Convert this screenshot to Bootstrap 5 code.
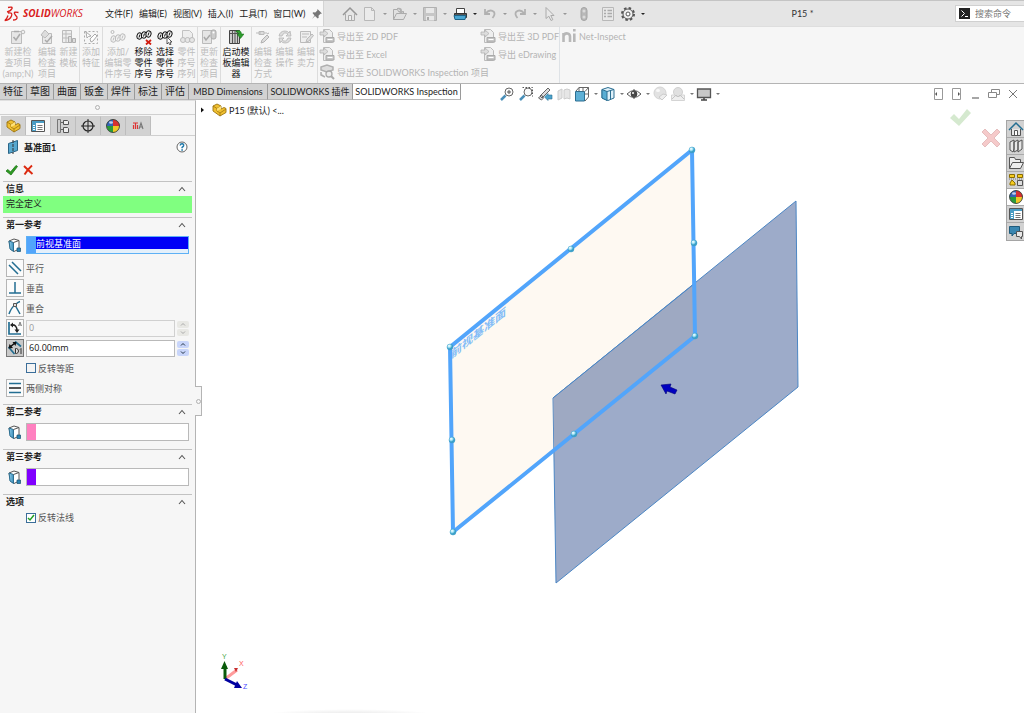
<!DOCTYPE html>
<html lang="zh-CN">
<head>
<meta charset="utf-8">
<meta name="viewport" content="width=device-width, initial-scale=1">
<title>SOLIDWORKS - P15</title>
<link href="https://cdn.jsdelivr.net/npm/bootstrap@5.3.0/dist/css/bootstrap.min.css" rel="stylesheet">
<style>
html,body{height:100%}
body{font-family:Lato,"Noto Sans CJK SC",sans-serif;font-size:9px;line-height:11px;color:#222;background:#fff;overflow:hidden}
button{border:0;background:none;padding:0;color:inherit;font:inherit}
svg{display:block;flex:none}
.ic{width:16px;height:16px}
.caret{width:14px;height:16px}
.titlebar{height:26px;background:#e5e5e5;border-top:1px solid #c4c4c4}
.brandbox{width:324px;background:#f8f8f8;border-right:1px solid #d4d4d4;padding-left:4px;flex:none}
.brand{width:101px;flex:none;gap:3px;color:#d9201c;font-family:"Open Sans",sans-serif;font-size:10px;font-style:italic;text-decoration:none}
.menus{gap:6px;flex:none}
.menus a{color:#222;text-decoration:none;white-space:nowrap}
.quick{padding-left:18px}
.faded{opacity:.4}
.doctitle{color:#333}
.searchbox{width:69px;height:17px;background:#fff;border:1px solid #d0d0d0;border-right:0;padding-left:3px;gap:5px}
.searchbox input{border:0;width:40px;padding:0;font-size:9px;background:none}
.searchbox input::placeholder{color:#777}
.ribbon{height:57px;background:#f6f6f6;border-top:1px solid #dedede}
.rgroup{border-right:1px solid #dcdcdc}
.rgroup button{width:21px;display:flex;flex-direction:column;align-items:center;gap:1px;padding-top:2px;white-space:nowrap;text-align:center;color:#111}
.rgroup button.w22{width:22px}.rgroup button.w30{width:30px}.rgroup button.w36{width:36px}
.rgroup button:disabled{color:#bdbdbd}
.rlist{padding-left:1px;width:162px}
.rlist.short{width:79px;padding-left:0}
.rlist button{height:18px;gap:2px;color:#b4b4b4;white-space:nowrap}
.strip{height:17px;border-top:1px solid #b4b4b4}
.cmdtabs{flex:none}
.cmdtabs button{height:16px;border-right:1px solid #9a9a9a;border-bottom:1px solid #b8b8b8;background:#d2d2d2;color:#222;white-space:nowrap;text-align:center;flex:none}
.cmdtabs .t27{width:27px}.cmdtabs .t78{width:79px}.cmdtabs .t85{width:85px}.cmdtabs .t108{width:108px;background:#fff}
.cmdtabs .cjk2{font-size:10px}
.views{margin-left:38px;padding-top:2px}
.views button{width:18px}.views .w19{width:19px}.views .drop{width:8px}
.wins{padding:3px 3px 0 0;gap:3px;color:#888}
.panel{width:196px;flex:none;background:#f6f6f6;border-right:1px solid #b4b4b4;border-top:1px solid #e0e0e0;position:relative}
.grip{height:14px;border-bottom:1px solid #d0d0d0}
.dot{width:5px;height:5px;border:1px solid #b0b0b0;border-radius:50%}
.ptabs{padding:1px 0 0 1px;border-bottom:1px solid #cfcfcf}
.ptabs button{width:25px;height:19px;background:#d2d2d2;border-right:1px solid #bdbdbd;border-top:1px solid #cfcfcf;display:flex;align-items:center;justify-content:center}
.ptabs button.on{background:#f6f6f6}
.ptitle{height:22px;padding:0 5px 0 6px;gap:2px}
.pok{height:23px;padding-left:4px}
.sec{margin:0 3px;border-top:1px solid #c2c2c2}
.sec.next{margin-top:6px}
.sechead{height:14px;padding:0 5px 1px 3px}
.sechead h2{font-size:9px;line-height:11px;font-weight:700;margin:0;color:#222}
.status{background:#80ff80;height:17px;padding:2px 3px;color:#222}
.prow{height:20px;padding:0 3px;gap:2px;color:#555}
.prow.sel{height:18px}
.tool{width:18px;height:18px;border:1px solid #b5b5b5;background:#fbfbfb;color:#555;display:flex;align-items:center;justify-content:center;flex:none}
.tool.down{background:#c9c9c9;border-color:#777}
.gear18{width:18px;flex:none}
.pick{height:18px;border:1px solid #b9b9b9;background:#fff}
.pick span{width:9px;flex:none}
.pick input{flex:1;min-width:0;border:0;padding:0;background:transparent;font-size:9px}
.pick.hot{border:1px solid #5eb1f5;background:#e4f0fb}
.pick.hot input{height:12px;background:#0000f6;color:#fff}
.num{flex:1;min-width:0;height:17px;border:1px solid #b9b9b9;padding:0 2px 2px;font-family:"Open Sans",sans-serif;font-size:9px;color:#111;background:#fff}
.num:disabled{color:#999;background:#f6f6f6;border-color:#d0d0d0}
.spin{width:12px;gap:1px}
.spin button{height:7px;background:#c8d5fa;border-radius:2px;display:flex;align-items:center;justify-content:center;color:#234}
.spin button:disabled{background:#e8e8e4;color:#aaa}
.tick{appearance:none;width:10px;height:10px;margin:0;border:1px solid #3b6e9a;background:#f4f4f4}
.tick:checked{background:#fff url("data:image/svg+xml,%3Csvg xmlns='http://www.w3.org/2000/svg' viewBox='0 0 8 8'%3E%3Cpath d='M1 4l2 2 4-5' fill='none' stroke='%2322a022' stroke-width='1.5'/%3E%3C/svg%3E")}
.tickrow{padding-left:23px}
.tickrow.low{height:17px}
.pull{position:absolute;right:-7px;top:285px;width:7px;height:30px;background:#f6f6f6;border:1px solid #b4b4b4;border-left:0;display:flex;align-items:center;justify-content:center}
.scene{position:absolute;inset:0;width:100%;height:100%}
.tree{position:absolute;left:3px;top:2px;gap:2px}
.confirm{position:absolute;right:23px;top:8px;width:52px;height:42px}
.taskpane{position:absolute;right:0;top:20px;width:18px;border:1px solid #a5a5a5;border-right:0}
.taskpane button{height:17px;background:#d2d2d2;border-bottom:1px solid #aaa;display:flex;align-items:center;justify-content:center}
.taskpane button.on{background:#fff}
.taskpane button:last-child{border-bottom:0}
</style>
</head>
<body class="d-flex flex-column">
<svg width="0" height="0" class="position-absolute" aria-hidden="true">
<defs>
<linearGradient id="gb" x1="0" x2="1"><stop offset="0" stop-color="#8fd0ee"/><stop offset="1" stop-color="#3c8cb8"/></linearGradient>
<radialGradient id="ball" cx=".35" cy=".3"><stop offset="0" stop-color="#fff"/><stop offset=".5" stop-color="#a8e6f8"/><stop offset="1" stop-color="#3aa0c8"/></radialGradient>
<radialGradient id="shade"><stop offset="0" stop-color="#000" stop-opacity=".12"/><stop offset="1" stop-color="#000" stop-opacity="0"/></radialGradient>
<symbol id="dn" viewBox="0 0 14 16"><path d="M5 7h4l-2 2z" fill="#222"/></symbol>
<symbol id="dng" viewBox="0 0 8 16"><path d="M2 7h4l-2 2z" fill="#777"/></symbol>
<symbol id="up" viewBox="0 0 10 8"><path d="M2 6l3-3.500 3 3.500" fill="none" stroke="#555" stroke-width="1.100"/></symbol>
<symbol id="newchk" viewBox="0 0 16 16"><path d="M1.500 2.500h10v12h-10z" fill="#e6e6e6" stroke="#bbb"/><path d="M4 2.500h5M3.500 8l2.500 3 4-6" fill="none" stroke="#aaa" stroke-width="1.600"/><circle cx="13" cy="3" r="1.800" fill="#eee" stroke="#bbb"/></symbol>
<symbol id="edchk" viewBox="0 0 16 16"><path d="M3.500 4.500h9v10h-9z" fill="#e9e9e9" stroke="#bbb"/><path d="M2 6l4-5 4 4-4 4z" fill="#ddd" stroke="#bbb"/><path d="M6 11l2 2 5-6" fill="none" stroke="#aaa" stroke-width="1.500"/></symbol>
<symbol id="tmpl" viewBox="0 0 16 16"><path d="M1.500 1.500h9v12h-9z" fill="#eee" stroke="#bbb"/><path d="M2 5h8M2 9h6M5 2v11" stroke="#bbb"/><path d="M7.500 7.500h3v6h-3zM11.500 9.500h3v4h-3z" fill="#ddd" stroke="#b0b0b0"/></symbol>
<symbol id="feat" viewBox="0 0 16 16"><path d="M1.500 2.500h13v12h-13z" fill="none" stroke="#aaa" stroke-dasharray="2 2"/><path d="M3 3l1 6 1.500-1.500L8 7zM8 13l-1-3 5-5 2 2-4 5z" fill="#fff" stroke="#aaa"/></symbol>
<symbol id="ball3" viewBox="0 0 16 16"><g fill="#f4f4f4" stroke="currentColor"><ellipse cx="3.500" cy="9" rx="2.500" ry="3.200" transform="rotate(15 3.500 9)"/><ellipse cx="8" cy="8" rx="2.500" ry="3.200" transform="rotate(15 8 8)"/><ellipse cx="12.500" cy="7" rx="2.500" ry="3.200" transform="rotate(15 12.500 7)"/><path d="M3 10.500l1-3M7.500 9.500l1-3M12 8.500l1-3"/></g></symbol>
<symbol id="addb" viewBox="0 0 16 16"><circle cx="2.500" cy="3" r="1.500" fill="none" stroke="#bbb"/><use href="#ball3" y="1" width="16" height="16"/></symbol>
<symbol id="rmb" viewBox="0 0 16 16"><use href="#ball3" y="-2" width="16" height="16"/><path d="M10 11l5 4.500M15 11l-5 4.500" stroke="#d01c10" stroke-width="1.800"/></symbol>
<symbol id="selb" viewBox="0 0 16 16"><use href="#ball3" y="-2" width="16" height="16"/><path d="M10 8v7l1.500-1.500L13 16l1-.5-1-2.500h2z" fill="#fff" stroke="#333" stroke-width=".8"/></symbol>
<symbol id="seq" viewBox="0 0 16 16"><path d="M3.500 1.500h7l3 3v7h-10z" fill="#eee" stroke="#c2c2c2"/><g fill="#e6e6e6" stroke="#bbb"><circle cx="4" cy="11" r="2.500"/><circle cx="8.500" cy="11" r="2.500"/><circle cx="13" cy="11" r="2.500"/></g></symbol>
<symbol id="upd" viewBox="0 0 16 16"><path d="M1.500 1.500h9v13h-9z" fill="#e6e6e6" stroke="#bbb"/><path d="M3 8l2 3 4-5" fill="none" stroke="#aaa" stroke-width="1.500"/><rect x="10" y="1" width="5" height="9" rx="2" fill="#ccc" stroke="#aaa"/><circle cx="12.500" cy="3.500" r="1" fill="#fff"/></symbol>
<symbol id="launch" viewBox="0 0 16 16"><path d="M1.500 1.500h10v13h-10z" fill="#ccc" stroke="#444"/><path d="M2 4.500h9M4.500 2v12M7 2v12M9.500 2v12" stroke="#555"/><path d="M8 2q5-2 5.500 3H16l-3.500 4.500L9 5h2q0-2-3-2z" fill="#2d9c2d" stroke="#176b17" stroke-width=".5"/></symbol>
<symbol id="meth" viewBox="0 0 16 16"><path d="M1 4h5M4 2.500h5v3H4zM9 4h3" fill="#ddd" stroke="#bbb"/><path d="M6 14l1-3 5-5 2 2-5 5zM12 5l2-1" fill="#ddd" stroke="#b2b2b2"/></symbol>
<symbol id="cyc" viewBox="0 0 16 16"><path d="M2 7q1-5 6-5 3 0 4 2l1-2 1 5H9l2-2q-4-3-6 2zM14 9q-1 5-6 5-3 0-4-2l-1 2-1-5h5l-2 2q4 3 6-2z" fill="#ddd" stroke="#b5b5b5" stroke-width=".8"/></symbol>
<symbol id="vend" viewBox="0 0 16 16"><path d="M2.500 2.500h10v11h-10z" fill="#eee" stroke="#bbb"/><path d="M4 5h7M4 8h5M8 13l1-3 5-5 1.500 1.500L11 12z" fill="#ddd" stroke="#bbb"/></symbol>
<symbol id="exp" viewBox="0 0 16 16"><path d="M4.500 1.500h6l3 3v10h-9z" fill="#eee" stroke="#bbb"/><path d="M1 4h4V2l4 3.500L5 9V7H1z" fill="#ddd" stroke="#b5b5b5" stroke-width=".8"/><path d="M7 9.500h8v4.500H7z" fill="#c6c6c6" stroke="#aaa"/><path d="M8.500 11.500h5" stroke="#fff"/></symbol>
<symbol id="expi" viewBox="0 0 16 16"><path d="M2 3l6-2 6 2v3l-6 2-6-2zM2 8v3l4 2" fill="#ddd" stroke="#b0b0b0" stroke-width="1.500"/><circle cx="10" cy="10" r="3" fill="#eee" stroke="#aaa" stroke-width="1.300"/><path d="M12 12l3 3" stroke="#aaa" stroke-width="2"/></symbol>
<symbol id="part" viewBox="0 0 16 16"><path d="M2 4l4-2 4 2v3l3-1.500 2 1v4L9 14l-7-5z" fill="#f0c030" stroke="#9c7410" stroke-width=".9"/><path d="M2 4l4 2.500 4-2.500M6 6.500V9l3 2 6-4M9 11v3" fill="none" stroke="#9c7410" stroke-width=".8"/><path d="M6 6.500L10 4v3L6 9z" fill="#ffe27a"/></symbol>
<symbol id="plist" viewBox="0 0 16 16"><path d="M1.500 2.500h13v11h-13z" fill="#fff" stroke="#555"/><path d="M2 3h12v2H2zM2 5h4v8H2z" fill="#4a9cc4"/><path d="M3 7.500h2M3 9.500h2M3 11.500h2" stroke="#fff"/><path d="M7.500 7.500h5M7.500 9.500h5M7.500 11.500h5" stroke="#777"/></symbol>
<symbol id="conf" viewBox="0 0 16 16"><path d="M2.500 1.500h3v13h-3z" fill="#ccc" stroke="#777"/><path d="M6 4.500h2M6 11.500h2" stroke="#666"/><path d="M8.500 2.500h4l1 1v3h-5zM8.500 9.500h4l1 1v4h-5z" fill="#eee" stroke="#555"/></symbol>
<symbol id="cross" viewBox="0 0 16 16"><circle cx="8" cy="8" r="5" fill="none" stroke="#222" stroke-width="1.200"/><path d="M8 1v14M1 8h14" stroke="#222"/></symbol>
<symbol id="wheel" viewBox="0 0 16 16"><circle cx="8" cy="8" r="6.500" fill="#2a9b3a"/><path d="M8 8V1.500A6.500 6.500 0 0 0 1.500 8z" fill="#3264b8"/><path d="M8 8V1.500A6.500 6.500 0 0 1 14.500 8z" fill="#d83030"/><path d="M8 8h6.500A6.500 6.500 0 0 1 8 14.500z" fill="#f0c828"/><circle cx="8" cy="8" r="6.500" fill="none" stroke="#333" stroke-width=".8"/><ellipse cx="6" cy="4.500" rx="2" ry="1.300" fill="#fff" opacity=".7"/></symbol>
<symbol id="tan" viewBox="0 0 16 16"><path d="M3 5h5M5.500 5v6M3.500 7v4M7.500 7v4" stroke="#d33" stroke-width="1.200"/><path d="M9 11l2-6 2 6M10 9h3" fill="none" stroke="#777" stroke-width="1.100"/></symbol>
<symbol id="plane" viewBox="0 0 16 16"><path d="M2.500 4.500l9-3v10l-9 3z" fill="#58a8cf" stroke="#2a6587"/><path d="M7 1v14" stroke="#333" stroke-dasharray="3 1"/></symbol>
<symbol id="okay" viewBox="0 0 16 16"><path d="M2 9l2-1.500L6.500 10 12 3.500l1.500 1L7 13z" fill="#2d9a22" stroke="#1d7717" stroke-width=".8"/></symbol>
<symbol id="no" viewBox="0 0 16 16"><path d="M4 4q3 3 8.500 8M12 3.500Q8 7 4.500 12.500" fill="none" stroke="#dc2a10" stroke-width="1.900"/></symbol>
<symbol id="help" viewBox="0 0 16 16"><circle cx="8" cy="8" r="5" fill="#fff" stroke="#666"/><path d="M6.200 6.500q.2-1.800 2-1.700 1.700.3 1.400 1.900-.2.800-1.500 1.600v1" fill="none" stroke="#1e78aa" stroke-width="1.500"/><path d="M7.300 10.300h1.600v1.400H7.300z" fill="#1e78aa"/></symbol>
<symbol id="cube" viewBox="0 0 16 16"><path d="M3 4l5-2 5 1.500V12l-5 2.500L4.500 12z" fill="#fff" stroke="#555"/><path d="M3 4l4.500 1.500v9L4 12z" fill="url(#gb)" stroke="#2c6f92"/><path d="M7.500 5.500L13 3.500" stroke="#555"/><path d="M11 11h3.500v3.500H11z" fill="#2b86b5" stroke="#174f6f" stroke-width=".7"/></symbol>
<symbol id="house" viewBox="0 0 16 16"><path d="M3.500 8v6.500h9V8" fill="#e8e8e8" stroke="#555"/><path d="M1 9l7-7 7 7" fill="none" stroke="currentColor" stroke-width="1.500"/><path d="M6.500 14V9.500h3V14" fill="#fff" stroke="#555"/></symbol>
<symbol id="mag" viewBox="0 0 16 16"><path d="M2 14l4.500-4.500" stroke="#4a8fb8" stroke-width="2.500"/><circle cx="10" cy="6" r="4" fill="#fafafa" stroke="#666"/></symbol>
<symbol id="bino" viewBox="0 0 16 16"><path d="M3 10l8-8 2 2-8 8zM1.500 12l3-3 2 3-2 2z" fill="#ddd" stroke="#666"/><path d="M15 9h-4V7.500L7.500 11l3.500 3.500V13h4z" fill="#4ba3cc" stroke="#2c6f92" stroke-width=".6"/></symbol>
<symbol id="sect" viewBox="0 0 16 16"><path d="M2 5l4-2v9l-4 2zM8 4l3-1 3 1v9l-3-1-3 1z" fill="#e6e6e6" stroke="#ccc"/></symbol>
<symbol id="orient" viewBox="0 0 16 16"><path d="M1.500 5.500h9V15h-9z" fill="#5eb0d6" stroke="#2c6f92"/><path d="M2 5l3-3.500h9.500V11L11 15M11 5.500l3.500-4M5 1.500v4M9 1.500v4M11 8h3" fill="none" stroke="#666"/></symbol>
<symbol id="disp" viewBox="0 0 16 16"><path d="M2 3.500L8 1.500l6 2v8.500l-6 2.500L2 12z" fill="#dff1fa" stroke="#2c6f92"/><path d="M2 3.500l5 2v9L2 12z" fill="#5aaed4" stroke="#2c6f92"/><path d="M7 5.500l7-2M10.500 4.500v9" stroke="#2c6f92"/></symbol>
<symbol id="eye" viewBox="0 0 16 16"><path d="M1 8Q8 1 15 8 8 15 1 8z" fill="#fff" stroke="#555"/><circle cx="8" cy="8" r="3.300" fill="#444"/><path d="M8 3v10" stroke="#555"/><circle cx="7" cy="7" r="1" fill="#fff"/></symbol>
<symbol id="sphere" viewBox="0 0 16 16"><circle cx="8" cy="7" r="6" fill="#e2e2e2" stroke="#d4d4d4"/><ellipse cx="6" cy="4.500" rx="2" ry="1.500" fill="#f8f8f8"/><path d="M7 11l4-3 4 1-5 5z" fill="#eee" stroke="#ccc"/></symbol>
<symbol id="spherebg" viewBox="0 0 16 16"><path d="M1.500 9h13v5.500h-13z" fill="#eee" stroke="#d4d4d4"/><circle cx="8" cy="6" r="4.500" fill="#e0e0e0" stroke="#d0d0d0"/><path d="M2 13l4-4 2 2 2-2 4 4" fill="none" stroke="#c4c4c4"/></symbol>
<symbol id="mon" viewBox="0 0 16 16"><path d="M1.500 3h13v8.500h-13z" fill="#c8c8c8" stroke="#555" stroke-width="1.300"/><path d="M8 12v2M5 14h6" stroke="#444" stroke-width="1.500"/></symbol>
</defs>
</svg>

<header class="titlebar d-flex">
  <div class="brandbox d-flex align-items-center">
    <a href="#" class="brand d-flex align-items-center">
      <svg width="16" height="16" viewBox="0 0 16 16" fill="none" stroke="#d9201c" stroke-width="1.300"><path d="M4 1.500q5-1 4 1Q7 5 3 6M4 7q5-1 3.500 3Q6 14 .8 14.500 3 13 4 9.500M14.500 6.500q-5-1-4 1 .5 1.500 2.500 3.500.5 3-4 3"/></svg>
      <span><b>SOLID</b>WORKS</span></a>
    <nav class="menus d-flex align-items-center">
      <a href="#">文件(F)</a><a href="#">编辑(E)</a><a href="#">视图(V)</a><a href="#">插入(I)</a><a href="#">工具(T)</a><a href="#">窗口(W)</a>
      <button aria-label="固定"><svg width="12" height="12" viewBox="0 0 12 12"><path d="M6.500 1L11 5.500l-1.500.3-2 2 .2 2-1 .7L4 8l-3 3 2.500-3.500L1.500 5l.8-.8 2 .2 2-2z" fill="#777"/></svg></button>
    </nav>
  </div>
  <div class="quick d-flex align-items-center">
    <button aria-label="主页" class="faded"><svg class="ic"><use href="#house"/></svg></button>
    <button aria-label="新建" class="d-flex faded ms-1"><svg class="ic" viewBox="0 0 16 16"><path d="M2.500 1.500h7l3 3v10h-10zM9.500 1.500v3h3" fill="#f4f4f4" stroke="#777"/></svg><svg class="caret"><use href="#dn"/></svg></button>
    <button aria-label="打开" class="d-flex faded"><svg class="ic" viewBox="0 0 16 16"><path d="M1.500 13.500v-10h4l1 2h5v2M1.500 13.500l3-6h10l-3 6z" fill="#ddd" stroke="#555"/><path d="M5 2q5-1 5 3h2L9 8 6 5h2q0-2-3-2z" fill="#666"/></svg><svg class="caret"><use href="#dn"/></svg></button>
    <button aria-label="保存" class="d-flex faded"><svg class="ic" viewBox="0 0 16 16"><path d="M1.500 1.500h13v13h-13z" fill="#999" stroke="#666"/><path d="M4 2h8v5H4zM4 10h8v4.500H4z" fill="#eee"/><path d="M6 11v3" stroke="#555" stroke-width="2"/></svg><svg class="caret"><use href="#dn"/></svg></button>
    <button aria-label="打印" class="d-flex"><svg class="ic" viewBox="0 0 16 16"><path d="M4.500 2.500h8V8h-8z" fill="#fff" stroke="#444"/><path d="M2.500 7.500h12v4h-12z" fill="#555" stroke="#333"/><path d="M2 9.500h12l-1 4H3z" fill="#49a6d2" stroke="#1e6488"/></svg><svg class="caret"><use href="#dn"/></svg></button>
    <button aria-label="撤销" class="d-flex faded"><svg class="ic" viewBox="0 0 16 16"><path d="M3 3v5h5M3.500 7.500Q8 2.500 12 6q1.500 2.500-1.500 6" fill="none" stroke="#666" stroke-width="1.800"/></svg><svg class="caret"><use href="#dn"/></svg></button>
    <button aria-label="重做" class="d-flex faded"><svg class="ic" viewBox="0 0 16 16"><path d="M13 3v5H8M12.500 7.500Q8 2.500 4 6q-1.500 2.500 1.500 6" fill="none" stroke="#666" stroke-width="1.800"/></svg><svg class="caret"><use href="#dn"/></svg></button>
    <button aria-label="选择" class="d-flex faded"><svg class="ic" viewBox="0 0 16 16"><path d="M4 1.500v11l2.800-2.300 2.200 4.300 1.800-.8-2-4.200H12z" fill="#eee" stroke="#555"/></svg><svg class="caret"><use href="#dn"/></svg></button>
    <button aria-label="重建" class="faded ms-1"><svg class="ic" viewBox="0 0 16 16"><rect x="5" y="1.500" width="6" height="13" rx="3" fill="#777" stroke="#444"/><circle cx="8" cy="5" r="1.500" fill="#ccc"/><circle cx="8" cy="11" r="1.500" fill="#ccc"/></svg></button>
    <button aria-label="文件属性" class="faded ms-2"><svg class="ic" viewBox="0 0 16 16"><path d="M2.500 1.500h11v13h-11z" fill="#eee" stroke="#777"/><path d="M4 4.500h2M4 7.500h2M4 10.500h2M7.500 4.500H12M7.500 7.500H12M7.500 10.500H12" stroke="#555" stroke-width="1.300"/></svg></button>
    <button aria-label="选项" class="d-flex ms-1"><svg class="ic" viewBox="0 0 16 16"><circle cx="8" cy="8" r="6" fill="none" stroke="#555" stroke-width="2" stroke-dasharray="2.500 2.200"/><circle cx="8" cy="8" r="5" fill="#f0f0f0" stroke="#555"/><circle cx="8" cy="8" r="2" fill="#fff" stroke="#555"/></svg><svg class="caret"><use href="#dn"/></svg></button>
  </div>
  <div class="doctitle flex-grow-1 d-flex align-items-center justify-content-center">P15 *</div>
  <div class="d-flex align-items-center"><label class="searchbox d-flex align-items-center"><svg width="11" height="11" viewBox="0 0 11 11"><path d="M0 0h11v11H0z" fill="#222"/><path d="M2.500 2.500l3 3-3 3M6 8.500h3" fill="none" stroke="#fff"/></svg><input type="text" placeholder="搜索命令" aria-label="搜索命令"></label></div>
</header>

<section class="ribbon d-flex">
  <div class="rgroup d-flex"><button class="w36" disabled><svg class="ic"><use href="#newchk"/></svg><span>新建检<br>查项目<br>(amp;N)</span></button><button class="w22" disabled><svg class="ic"><use href="#edchk"/></svg><span>编辑<br>检查<br>项目</span></button><button disabled><svg class="ic"><use href="#tmpl"/></svg><span>新建<br>模板</span></button></div>
  <div class="rgroup d-flex"><button class="w22" disabled><svg class="ic"><use href="#feat"/></svg><span>添加<br>特征</span></button></div>
  <div class="rgroup d-flex"><button class="w30" disabled><svg class="ic"><use href="#addb"/></svg><span>添加/<br>编辑零<br>件序号</span></button><button><svg class="ic"><use href="#rmb"/></svg><span>移除<br>零件<br>序号</span></button><button class="w22"><svg class="ic"><use href="#selb"/></svg><span>选择<br>零件<br>序号</span></button><button disabled><svg class="ic"><use href="#seq"/></svg><span>零件<br>序号<br>序列</span></button></div>
  <div class="rgroup d-flex"><button class="w22" disabled><svg class="ic"><use href="#upd"/></svg><span>更新<br>检查<br>项目</span></button></div>
  <div class="rgroup d-flex"><button class="w30"><svg class="ic"><use href="#launch"/></svg><span>启动模<br>板编辑<br>器</span></button></div>
  <div class="rgroup d-flex"><button class="w22" disabled><svg class="ic"><use href="#meth"/></svg><span>编辑<br>检查<br>方式</span></button><button disabled><svg class="ic"><use href="#cyc"/></svg><span>编辑<br>操作</span></button><button class="w22" disabled><svg class="ic"><use href="#vend"/></svg><span>编辑<br>卖方</span></button></div>
  <div class="d-flex border-end">
    <div class="rlist d-flex flex-column align-items-start"><button class="d-flex align-items-center" disabled><svg class="ic"><use href="#exp"/></svg>导出至 2D PDF</button><button class="d-flex align-items-center" disabled><svg class="ic"><use href="#exp"/></svg>导出至 Excel</button><button class="d-flex align-items-center" disabled><svg class="ic"><use href="#expi"/></svg>导出至 SOLIDWORKS Inspection 项目</button></div>
    <div class="rlist short d-flex flex-column align-items-start"><button class="d-flex align-items-center" disabled><svg class="ic"><use href="#exp"/></svg>导出至 3D PDF</button><button class="d-flex align-items-center" disabled><svg class="ic"><use href="#exp"/></svg>导出 eDrawing</button></div>
  </div>
  <div class="rlist"><button class="d-flex align-items-center" disabled><svg width="16" height="16" viewBox="0 0 16 16" fill="none" stroke="#b8b8b8" stroke-width="2.600"><path d="M2.500 14V5M2.500 8q1-3 4-2.500 2.500.5 2.500 3V14M13.300 5.500V14M13.300 1v2.500"/></svg>Net-Inspect</button></div>
</section>

<div class="strip d-flex align-items-start">
  <div class="cmdtabs d-flex" role="tablist"><button class="t27 cjk2">特征</button><button class="t27 cjk2">草图</button><button class="t27 cjk2">曲面</button><button class="t27 cjk2">钣金</button><button class="t27 cjk2">焊件</button><button class="t27 cjk2">标注</button><button class="t27 cjk2">评估</button><button class="t78">MBD Dimensions</button><button class="t85">SOLIDWORKS 插件</button><button class="t108">SOLIDWORKS Inspection</button></div>
  <div class="views d-flex">
    <button class="w19" aria-label="整屏显示"><svg class="ic" viewBox="0 0 16 16"><use href="#mag"/><path d="M8 6h4M10 4v4" stroke="#555"/></svg></button>
    <button class="w19" aria-label="局部放大"><svg class="ic" viewBox="0 0 16 16"><use href="#mag"/><path d="M4.500 1.500h10v9" fill="none" stroke="#555" stroke-dasharray="1.500 1.500"/></svg></button>
    <button class="w19" aria-label="上一视图"><svg class="ic"><use href="#bino"/></svg></button>
    <button aria-label="剖面视图"><svg class="ic"><use href="#sect"/></svg></button>
    <button aria-label="视图定向"><svg class="ic"><use href="#orient"/></svg></button><button class="drop" aria-label="展开"><svg width="8" height="16"><use href="#dng"/></svg></button>
    <button aria-label="显示样式"><svg class="ic"><use href="#disp"/></svg></button><button class="drop" aria-label="展开"><svg width="8" height="16"><use href="#dng"/></svg></button>
    <button aria-label="隐藏显示"><svg class="ic"><use href="#eye"/></svg></button><button class="drop" aria-label="展开"><svg width="8" height="16"><use href="#dng"/></svg></button>
    <button aria-label="编辑外观"><svg class="ic"><use href="#sphere"/></svg></button>
    <button aria-label="应用布景"><svg class="ic"><use href="#spherebg"/></svg></button><button class="drop" aria-label="展开"><svg width="8" height="16"><use href="#dng"/></svg></button>
    <button aria-label="视图设置"><svg class="ic"><use href="#mon"/></svg></button><button class="drop" aria-label="展开"><svg width="8" height="16"><use href="#dng"/></svg></button>
  </div>
  <div class="wins d-flex ms-auto">
    <button aria-label="左侧"><svg width="16" height="14" viewBox="0 0 16 14"><path d="M4.500 1.500h8v11h-8z" fill="#fff" stroke="#999"/><path d="M7 5v4L5 7z" fill="#555"/></svg></button>
    <button aria-label="右侧"><svg width="16" height="14" viewBox="0 0 16 14"><path d="M3.500 1.500h8v11h-8z" fill="#fff" stroke="#999"/><path d="M9 5v4l2-2z" fill="#555"/></svg></button>
    <button aria-label="最小化"><svg width="15" height="14" viewBox="0 0 15 14"><path d="M4 11h7" stroke="#888" stroke-width="1.500"/></svg></button>
    <button aria-label="还原"><svg width="16" height="14" viewBox="0 0 16 14"><path d="M5.500 5V2.500h8v5H11M2.500 5.500h8v5h-8z" fill="none" stroke="#888"/></svg></button>
    <button aria-label="关闭"><svg width="16" height="14" viewBox="0 0 16 14"><path d="M4 3l8 8M12 3l-8 8" stroke="#777"/></svg></button>
  </div>
</div>

<main class="d-flex flex-grow-1">
  <aside class="panel">
    <div class="grip d-flex justify-content-center align-items-center"><span class="dot"></span></div>
    <div class="ptabs d-flex"><button aria-label="设计树"><svg class="ic"><use href="#part"/></svg></button><button class="on" aria-label="属性"><svg class="ic"><use href="#plist"/></svg></button><button aria-label="配置"><svg class="ic"><use href="#conf"/></svg></button><button aria-label="尺寸"><svg class="ic"><use href="#cross"/></svg></button><button aria-label="外观"><svg class="ic"><use href="#wheel"/></svg></button><button aria-label="检查"><svg class="ic"><use href="#tan"/></svg></button></div>
    <div class="ptitle d-flex align-items-center"><svg class="ic"><use href="#plane"/></svg><b class="flex-grow-1">基准面1</b><button aria-label="帮助"><svg class="ic"><use href="#help"/></svg></button></div>
    <div class="pok d-flex align-items-center"><button aria-label="确定"><svg class="ic"><use href="#okay"/></svg></button><button aria-label="取消"><svg class="ic"><use href="#no"/></svg></button></div>
    <section class="sec mb-1"><div class="sechead d-flex align-items-center justify-content-between"><h2>信息</h2><button aria-label="折叠"><svg width="10" height="8"><use href="#up"/></svg></button></div><div class="status">完全定义</div></section>
    <section class="sec"><div class="sechead d-flex align-items-center justify-content-between"><h2>第一参考</h2><button aria-label="折叠"><svg width="10" height="8"><use href="#up"/></svg></button></div>
      <div class="prow sel d-flex align-items-center mt-1 mb-1"><span class="gear18"><svg class="ic"><use href="#cube"/></svg></span><div class="pick hot d-flex flex-grow-1"><span style="background:#52a5fb"></span><input value="前视基准面" aria-label="第一参考"></div></div>
      <div class="prow d-flex align-items-center"><button class="tool" aria-label="平行"><svg class="ic" viewBox="0 0 16 16"><path d="M2 5l9 9M5 2l9 9" stroke="#236e92" stroke-width="1.500"/></svg></button>平行</div>
      <div class="prow d-flex align-items-center"><button class="tool" aria-label="垂直"><svg class="ic" viewBox="0 0 16 16"><path d="M8 2v11M2 13h12" stroke="#236e92" stroke-width="1.500"/></svg></button>垂直</div>
      <div class="prow d-flex align-items-center"><button class="tool" aria-label="重合"><svg class="ic" viewBox="0 0 16 16"><path d="M2 14q2-6 6-9 3-3 5-3.500M8 5l5 9" fill="none" stroke="#236e92" stroke-width="1.500"/><path d="M6.500 3.500h3v3h-3z" fill="#ddd" stroke="#555"/></svg></button>重合</div>
      <div class="prow d-flex align-items-center"><button class="tool" aria-label="角度"><svg class="ic" viewBox="0 0 16 16"><path d="M2 2v12h12" fill="none" stroke="#236e92" stroke-width="1.700"/><path d="M4 5q6-1 6 6" fill="none" stroke="#222" stroke-width="1.500"/><path d="M3 5l3-2.500v5zM10 13l-2.500-3.500h5z" fill="#222"/><path d="M11.500 6L13 2l1.500 4M12 5h2" fill="none" stroke="#666" stroke-width=".8"/></svg></button><input class="num" value="0" disabled aria-label="角度"><div class="spin d-flex flex-column"><button disabled aria-label="增加"><svg width="8" height="5" viewBox="0 0 8 5"><path d="M2 3.500l2-2 2 2" fill="none" stroke="currentColor"/></svg></button><button disabled aria-label="减少"><svg width="8" height="5" viewBox="0 0 8 5"><path d="M2 1.500l2 2 2-2" fill="none" stroke="currentColor"/></svg></button></div></div>
      <div class="prow d-flex align-items-center"><button class="tool down" aria-label="距离"><svg class="ic" viewBox="0 0 16 16"><path d="M1.500 7l6 7M8 1.500l6 5" stroke="#236e92" stroke-width="1.700"/><path d="M3 7l5-4" stroke="#111" stroke-width="1.600"/><path d="M1.500 8.500l1-4.500 3.500 4zM9.500 2L8.500 6 5.500 2z" fill="#111"/><path d="M8.500 8.500v5h1q2-.5 2-2.500t-2-2.500zM13 9.500l1-1v5.500" fill="#ddd" stroke="#333"/></svg></button><input class="num" value="60.00mm" aria-label="偏移距离"><div class="spin d-flex flex-column"><button aria-label="增加"><svg width="8" height="5" viewBox="0 0 8 5"><path d="M2 3.500l2-2 2 2" fill="none" stroke="currentColor"/></svg></button><button aria-label="减少"><svg width="8" height="5" viewBox="0 0 8 5"><path d="M2 1.500l2 2 2-2" fill="none" stroke="currentColor"/></svg></button></div></div>
      <label class="prow tickrow d-flex align-items-center"><input type="checkbox" class="tick">反转等距</label>
      <div class="prow d-flex align-items-center"><button class="tool" aria-label="两侧对称"><svg class="ic" viewBox="0 0 16 16"><path d="M2 3.500h12M2 12.500h12" stroke="#236e92" stroke-width="1.500"/><path d="M2 8h12" stroke="#555" stroke-width="2"/></svg></button>两侧对称</div>
    </section>
    <section class="sec next pb-2"><div class="sechead d-flex align-items-center justify-content-between"><h2>第二参考</h2><button aria-label="折叠"><svg width="10" height="8"><use href="#up"/></svg></button></div>
      <div class="prow sel d-flex align-items-center mt-1"><span class="gear18"><svg class="ic"><use href="#cube"/></svg></span><div class="pick d-flex flex-grow-1"><span style="background:#ff80c0"></span><input aria-label="第二参考"></div></div></section>
    <section class="sec pb-2"><div class="sechead d-flex align-items-center justify-content-between"><h2>第三参考</h2><button aria-label="折叠"><svg width="10" height="8"><use href="#up"/></svg></button></div>
      <div class="prow sel d-flex align-items-center mt-1"><span class="gear18"><svg class="ic"><use href="#cube"/></svg></span><div class="pick d-flex flex-grow-1"><span style="background:#8000ff"></span><input aria-label="第三参考"></div></div></section>
    <section class="sec"><div class="sechead d-flex align-items-center justify-content-between"><h2>选项</h2><button aria-label="折叠"><svg width="10" height="8"><use href="#up"/></svg></button></div>
      <label class="prow tickrow low d-flex align-items-center"><input type="checkbox" class="tick" checked>反转法线</label></section>
    <div class="pull"><span class="dot"></span></div>
  </aside>

  <section class="position-relative flex-grow-1">
    <svg class="scene" viewBox="196 100 828 613" preserveAspectRatio="xMidYMid meet">
      <path d="M450 347L692 150l3 186-242 196z" fill="#fef9f2"/>
      <path d="M553 398L796 201l2 186-242 196z" fill="#9dabc9" stroke="#4b86c4"/>
      <path d="M553.500 398L694 284l1 52-141 114z" fill="#9ea9c2"/>
      <path d="M553 398L694 284" stroke="#4b86c4"/>
      <text transform="translate(451 359) skewY(-39)" font-size="11" font-weight="700" fill="#84bdf7" font-family="Noto Sans CJK SC">前视基准面</text>
      <path d="M450 347L692 150l3 186-242 196z" fill="none" stroke="#52a5fb" stroke-width="4" stroke-linejoin="round"/>
      <g fill="url(#ball)" stroke="#3b9cc8" stroke-width=".5"><circle cx="450" cy="347" r="3"/><circle cx="571" cy="249" r="3"/><circle cx="692" cy="150" r="3"/><circle cx="694" cy="243" r="3"/><circle cx="695" cy="336" r="3"/><circle cx="574" cy="434" r="3"/><circle cx="453" cy="532" r="3"/><circle cx="452" cy="440" r="3"/></g>
      <path d="M661 385l10-1-1 3 7 3-2 4-8-3-1 3z" fill="#0000c0" stroke="#000078" stroke-width=".6"/>
      <path d="M225 679l12-9" stroke="#ff9c9c" stroke-width="3"/><path d="M234 668h4l-2 4z" fill="#c83030"/>
      <path d="M225 679v-13" stroke="#0a5a0a" stroke-width="3"/><path d="M221 669l3.500-8 3.500 8z" fill="#0a5a0a"/>
      <path d="M225 679l12 6" stroke="#0000a0" stroke-width="3"/><path d="M237 681l5 7-8 0z" fill="#0000a0"/>
      <g font-size="7" font-family="Liberation Sans"><text x="222" y="659" fill="#4aa84a">Y</text><text x="239" y="666" fill="#ff5a5a">X</text><text x="243" y="689" fill="#4a4aff">Z</text></g>
      <ellipse cx="350" cy="716" rx="90" ry="7" fill="url(#shade)"/>
    </svg>
    <div class="tree d-flex align-items-center"><svg width="6" height="8" viewBox="0 0 6 8"><path d="M2 1.500v5L5 4z" fill="#111"/></svg><svg class="ic ms-1"><use href="#part"/></svg><span>P15 (默认) &lt;...</span></div>
    <svg class="confirm" viewBox="0 0 52 42"><path d="M1 10l4-4 5 5L18 1l4 4-12 13z" fill="#d5e9cf"/><path d="M38 22l6 6 6-6 3 3-6 6 6 6-3 3-6-6-6 6-3-3 6-6-6-6z" fill="#f5caca" stroke="#e0b4b4" stroke-width=".8" transform="translate(-2 -1)"/></svg>
    <div class="taskpane d-flex flex-column">
      <button aria-label="主页" style="color:#236e92"><svg class="ic"><use href="#house"/></svg></button>
      <button aria-label="设计库"><svg class="ic" viewBox="0 0 16 16"><path d="M2 4l4-2v9l-1 3-3-2zM6 4l4-2v10l-4 2zM10 4l4-2v9l-4 3z" fill="#e8e8e8" stroke="#555"/></svg></button>
      <button aria-label="文件探索器"><svg class="ic" viewBox="0 0 16 16"><path d="M1.500 13.500v-11h5l1 2h5v3M1.500 13.500l3-6h11l-3 6z" fill="#eee" stroke="#555"/></svg></button>
      <button aria-label="视图调色板"><svg class="ic" viewBox="0 0 16 16"><path d="M1.500 2.500h5v3h-5zM9.500 2.500h5v3h-5zM2 11l2-3 3 3v2H2z" fill="#f6cc20" stroke="#8a6c00"/><path d="M9.500 8.500h5v5h-5z" fill="#ddd" stroke="#555"/><path d="M1 7h13" stroke="#777" stroke-dasharray="1 1"/></svg></button>
      <button class="on" aria-label="外观"><svg class="ic"><use href="#wheel"/></svg></button>
      <button aria-label="自定义属性"><svg class="ic"><use href="#plist"/></svg></button>
      <button aria-label="论坛"><svg class="ic" viewBox="0 0 16 16"><path d="M1.500 2.500h10v7H6L4 12V9.500H1.500z" fill="#3a86b0" stroke="#1f5b7c"/><path d="M8.500 7.500h6v5h-1V15l-2-2.500h-3z" fill="#e8e8e8" stroke="#555"/></svg></button>
    </div>
  </section>
</main>
<script src="https://cdn.jsdelivr.net/npm/bootstrap@5.3.0/dist/js/bootstrap.bundle.min.js"></script>
</body>
</html>
